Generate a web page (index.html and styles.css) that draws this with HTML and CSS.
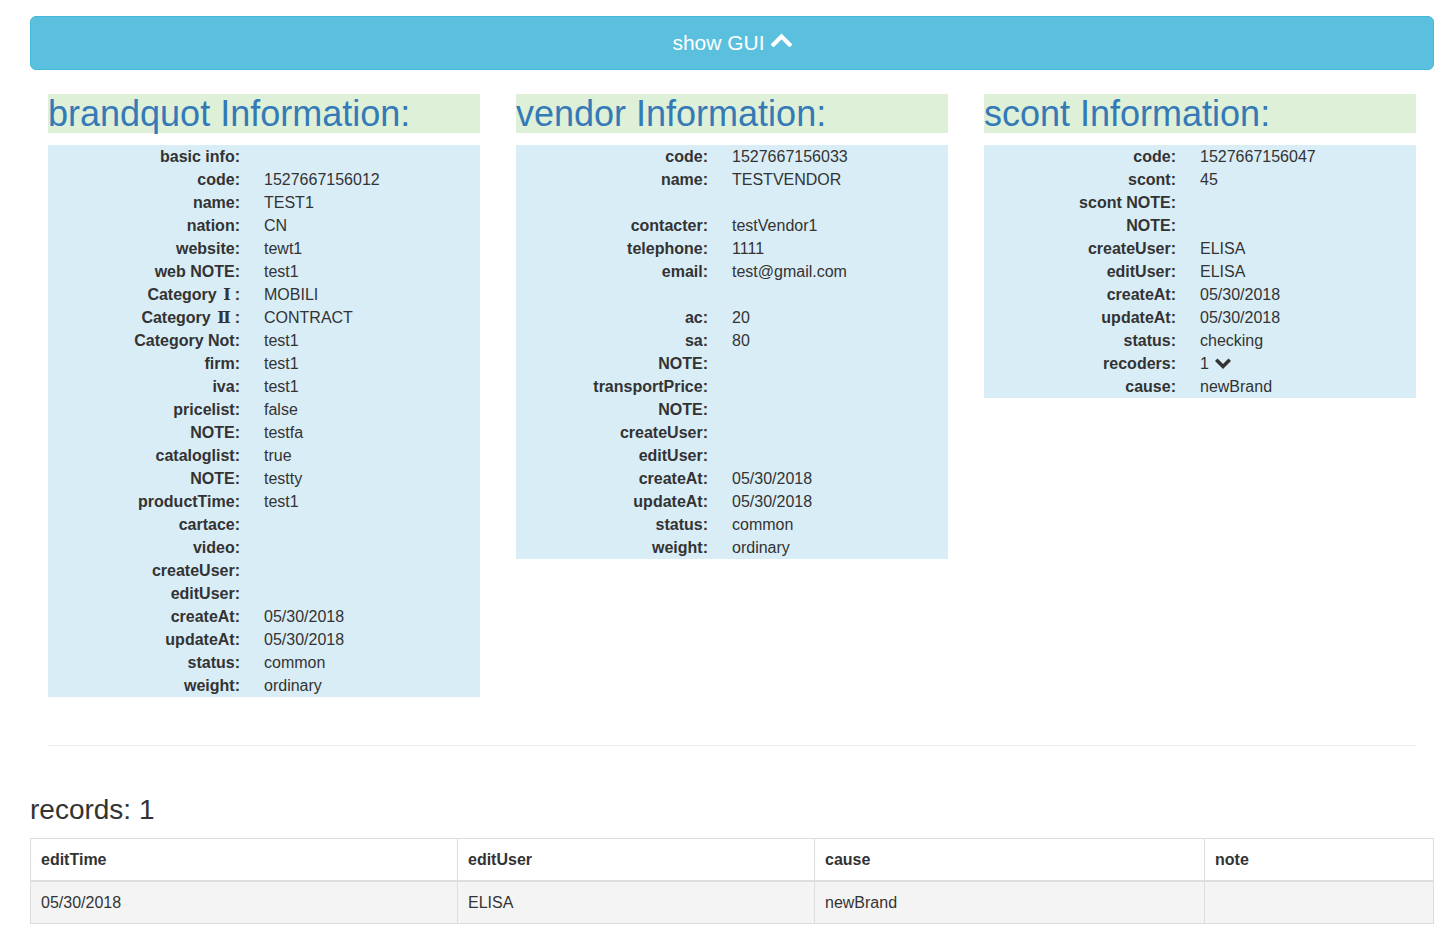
FILE: index.html
```html
<!DOCTYPE html>
<html>
<head>
<meta charset="utf-8">
<link rel="stylesheet" href="styles.css">
</head>
<body>
<div class="page">
  <button class="btn-gui">show GUI <svg class="chev-up" width="21" height="14" viewBox="0 0 21 14"><polyline points="2.5,11.5 10.5,3.5 18.5,11.5" fill="none" stroke="#fff" stroke-width="4.2" stroke-linecap="square"/></svg></button>

  <div class="cols">
    <section class="col">
      <h1 class="title">brandquot Information:</h1>
      <dl class="info">
        <dt>basic info:</dt><dd></dd>
        <dt>code:</dt><dd>1527667156012</dd>
        <dt>name:</dt><dd>TEST1</dd>
        <dt>nation:</dt><dd>CN</dd>
        <dt>website:</dt><dd>tewt1</dd>
        <dt>web NOTE:</dt><dd>test1</dd>
        <dt>Category <span class="roman">Ⅰ</span>:</dt><dd>MOBILI</dd>
        <dt>Category <span class="roman">Ⅱ</span>:</dt><dd>CONTRACT</dd>
        <dt>Category Not:</dt><dd>test1</dd>
        <dt>firm:</dt><dd>test1</dd>
        <dt>iva:</dt><dd>test1</dd>
        <dt>pricelist:</dt><dd>false</dd>
        <dt>NOTE:</dt><dd>testfa</dd>
        <dt>cataloglist:</dt><dd>true</dd>
        <dt>NOTE:</dt><dd>testty</dd>
        <dt>productTime:</dt><dd>test1</dd>
        <dt>cartace:</dt><dd></dd>
        <dt>video:</dt><dd></dd>
        <dt>createUser:</dt><dd></dd>
        <dt>editUser:</dt><dd></dd>
        <dt>createAt:</dt><dd>05/30/2018</dd>
        <dt>updateAt:</dt><dd>05/30/2018</dd>
        <dt>status:</dt><dd>common</dd>
        <dt>weight:</dt><dd>ordinary</dd>
      </dl>
    </section>

    <section class="col">
      <h1 class="title">vendor Information:</h1>
      <dl class="info">
        <dt>code:</dt><dd>1527667156033</dd>
        <dt>name:</dt><dd>TESTVENDOR</dd>
        <dt></dt><dd></dd>
        <dt>contacter:</dt><dd>testVendor1</dd>
        <dt>telephone:</dt><dd>1111</dd>
        <dt>email:</dt><dd>test@gmail.com</dd>
        <dt></dt><dd></dd>
        <dt>ac:</dt><dd>20</dd>
        <dt>sa:</dt><dd>80</dd>
        <dt>NOTE:</dt><dd></dd>
        <dt>transportPrice:</dt><dd></dd>
        <dt>NOTE:</dt><dd></dd>
        <dt>createUser:</dt><dd></dd>
        <dt>editUser:</dt><dd></dd>
        <dt>createAt:</dt><dd>05/30/2018</dd>
        <dt>updateAt:</dt><dd>05/30/2018</dd>
        <dt>status:</dt><dd>common</dd>
        <dt>weight:</dt><dd>ordinary</dd>
      </dl>
    </section>

    <section class="col">
      <h1 class="title">scont Information:</h1>
      <dl class="info">
        <dt>code:</dt><dd>1527667156047</dd>
        <dt>scont:</dt><dd>45</dd>
        <dt>scont NOTE:</dt><dd></dd>
        <dt>NOTE:</dt><dd></dd>
        <dt>createUser:</dt><dd>ELISA</dd>
        <dt>editUser:</dt><dd>ELISA</dd>
        <dt>createAt:</dt><dd>05/30/2018</dd>
        <dt>updateAt:</dt><dd>05/30/2018</dd>
        <dt>status:</dt><dd>checking</dd>
        <dt>recoders:</dt><dd>1 <svg class="chev-down" width="16" height="12" viewBox="0 0 16 12"><polyline points="2.5,3 8,8.5 13.5,3" fill="none" stroke="#333" stroke-width="3.6" stroke-linecap="square"/></svg></dd>
        <dt>cause:</dt><dd>newBrand</dd>
      </dl>
    </section>
  </div>

  <hr class="sep">

  <h3 class="records">records: 1</h3>
  <table class="rec-table">
    <colgroup>
      <col class="c1"><col class="c2"><col class="c3"><col class="c4">
    </colgroup>
    <thead>
      <tr><th>editTime</th><th>editUser</th><th>cause</th><th>note</th></tr>
    </thead>
    <tbody>
      <tr><td>05/30/2018</td><td>ELISA</td><td>newBrand</td><td></td></tr>
    </tbody>
  </table>
</div>
</body>
</html>
```
FILE: styles.css
```css
* { box-sizing: border-box; }
html, body {
  margin: 0;
  padding: 0;
  background: #fff;
}
body {
  font-family: "Liberation Sans", Arial, "DejaVu Sans", sans-serif;
  font-size: 16px;
  color: #333;
}
.page {
  padding: 16px 12px 0 30px;
}
.btn-gui {
  display: flex;
  align-items: center;
  justify-content: center;
  width: 100%;
  height: 54px;
  margin: 0;
  padding: 0 0 2px 0;
  background: #5bc0de;
  border: 1px solid #46b8da;
  border-radius: 6px;
  color: #fff;
  font-family: "Liberation Sans", Arial, sans-serif;
  font-size: 21px;
  line-height: 1;
  cursor: pointer;
}
.chev-up {
  margin-left: 6px;
  margin-top: -4px;
}
.cols {
  display: grid;
  grid-template-columns: 432px 432px 432px;
  column-gap: 36px;
  padding: 0 18px;
  margin-top: 24px;
  align-items: start;
}
.title {
  margin: 0 0 12px 0;
  height: 39px;
  line-height: 39px;
  background: #dff0d8;
  color: #337ab7;
  font-size: 36px;
  font-weight: normal;
  white-space: nowrap;
}
.info {
  display: grid;
  grid-template-columns: 192px 1fr;
  column-gap: 24px;
  grid-auto-rows: 23px;
  margin: 0;
  background: #d9edf7;
  line-height: 23px;
}
.info dt {
  text-align: right;
  font-weight: bold;
  white-space: nowrap;
}
.info dd {
  margin: 0;
  white-space: nowrap;
}
.roman {
  font-family: "Liberation Serif", "DejaVu Serif", "Noto Sans CJK SC", serif;
  font-weight: bold;
  margin: 0 4px 0 2px;
}
.chev-down {
  vertical-align: -1px;
  margin-left: 2px;
}
.sep {
  margin: 48px 18px 0;
  border: 0;
  border-top: 1px solid #eee;
  height: 0;
}
.records {
  margin: 48px 0 12px;
  font-size: 28px;
  line-height: 32px;
  font-weight: normal;
  color: #333;
}
.rec-table {
  width: 1403px;
  border-collapse: collapse;
  table-layout: fixed;
}
.c1 { width: 427px; }
.c2 { width: 357px; }
.c3 { width: 390px; }
.c4 { width: 229px; }
.rec-table th,
.rec-table td {
  border: 1px solid #ddd;
  padding: 9px 10px;
  line-height: 23px;
  text-align: left;
  vertical-align: top;
}
.rec-table th {
  font-weight: bold;
  border-bottom: 2px solid #ddd;
}
.rec-table tbody tr {
  background: #f4f4f4;
}
```
